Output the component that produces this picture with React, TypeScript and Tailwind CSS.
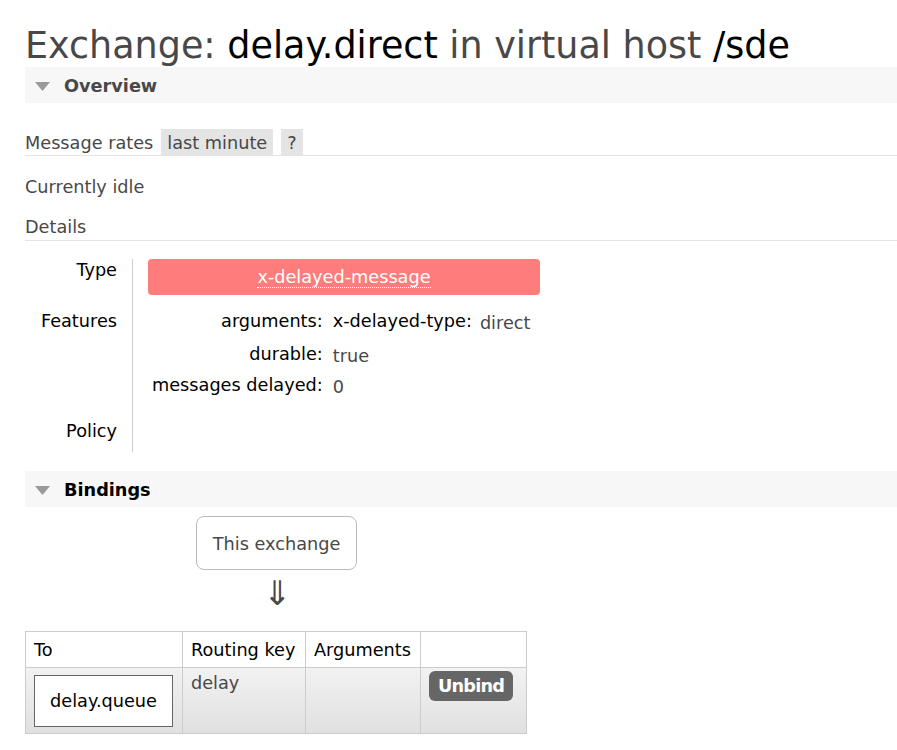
import React from "react";

const Tri = () => (
  <svg width="15" height="9" viewBox="0 0 15 9" className="shrink-0">
    <polygon points="0,0 15,0 7.5,9" fill="#9a9a9a" />
  </svg>
);

export default function App() {
  return (
    <div
      className="min-h-[750px] bg-white pl-[25px] text-[17.7px] text-[#484848]"
      style={{ fontFamily: '"DejaVu Sans", Verdana, sans-serif' }}
    >
      <h1 className="h-[67px] pt-[26px] text-[36.5px] leading-[40px] font-normal whitespace-nowrap">
        Exchange: <span className="text-black">delay.direct</span> in virtual host{" "}
        <span className="text-black">/sde</span>
      </h1>

      <div className="flex h-[36px] items-center gap-[14px] bg-[#f7f7f7] pl-[10px] pt-[3px] font-bold text-[#484848]">
        <Tri />
        <span>Overview</span>
      </div>

      <div className="mt-[26px] flex h-[27px] items-stretch border-b border-[#e4e4e4]">
        <span className="flex items-center pt-[2px]">Message rates</span>
        <span className="ml-[8px] flex items-center bg-[#e4e4e4] px-[6px] pt-[2px]">last minute</span>
        <span className="ml-[8px] flex items-center bg-[#e4e4e4] px-[6px] pt-[2px]">?</span>
      </div>

      <div className="mt-[18px] leading-[26px]">Currently idle</div>
      <div className="mt-[14px] border-b border-[#e4e4e4] leading-[26px]">Details</div>

      <div className="mt-[18px] flex">
        <div className="w-[108px] shrink-0 border-r border-[#cccccc] pr-[15px] text-right text-black">
          <div className="h-[45px] leading-[22px]">Type</div>
          <div className="h-[115px] pt-[6px] leading-[22px]">Features</div>
          <div className="h-[33px] pt-[1px] leading-[22px]">Policy</div>
        </div>
        <div className="pl-[15px]">
          <div className="flex h-[36px] w-[392px] items-center justify-center rounded-[4px] bg-[#ff7c7c] text-white">
            <span className="border-b border-dotted border-white leading-[20px]">x-delayed-message</span>
          </div>
          <div className="mt-[14px] grid grid-cols-[auto_auto] justify-start gap-x-[10px] pl-[4px] text-black">
            <div className="h-[33px] text-right leading-[24px]">arguments:</div>
            <div className="flex h-[33px] gap-[8px] leading-[24px]">
              <span>x-delayed-type:</span>
              <span className="mt-[2px] text-[#484848]">direct</span>
            </div>
            <div className="h-[31px] text-right leading-[24px]">durable:</div>
            <div className="mt-[2px] h-[29px] leading-[24px] text-[#484848]">true</div>
            <div className="h-[31px] text-right leading-[24px]">messages delayed:</div>
            <div className="mt-[2px] h-[29px] leading-[24px] text-[#484848]">0</div>
          </div>
        </div>
      </div>

      <div className="mt-[19px] flex h-[36px] items-center gap-[14px] bg-[#f7f7f7] pl-[10px] pt-[3px] font-bold text-black">
        <Tri />
        <span>Bindings</span>
      </div>

      <div className="ml-[171px] mt-[9px] flex h-[54px] w-[161px] items-center justify-center rounded-[8px] border border-[#bbbbbb] pt-[3px]">
        This exchange
      </div>
      <div className="ml-[171px] flex h-[46px] w-[161px] items-center justify-center text-[34px] leading-none font-light">
        ⇓
      </div>

      <table className="mt-[15px] border-collapse">
        <thead>
          <tr className="h-[36px] text-black">
            <th className="w-[157px] border border-[#cccccc] px-[8px] pt-[2px] text-left font-normal">To</th>
            <th className="w-[123px] border border-[#cccccc] px-[8px] pt-[2px] text-left font-normal">Routing key</th>
            <th className="w-[115px] border border-[#cccccc] px-[8px] pt-[2px] text-left font-normal">Arguments</th>
            <th className="w-[106px] border border-[#cccccc] px-[8px] text-left font-normal"></th>
          </tr>
        </thead>
        <tbody>
          <tr className="h-[66px] bg-gradient-to-b from-[#f2f2f2] to-[#e0e0e0]">
            <td className="border border-[#cccccc] px-[8px] align-middle">
              <div className="flex h-[52px] w-[139px] items-center justify-center border border-[#666666] bg-white pt-[2px] text-black">
                delay.queue
              </div>
            </td>
            <td className="border border-[#cccccc] px-[8px] pt-[2px] align-top">delay</td>
            <td className="border border-[#cccccc] px-[8px] align-top"></td>
            <td className="border border-[#cccccc] px-[8px] pt-[3px] align-top">
              <div className="flex h-[30px] w-[84px] items-center justify-center rounded-[6px] bg-[#666666] font-bold tracking-[-0.8px] text-white">
                Unbind
              </div>
            </td>
          </tr>
        </tbody>
      </table>
    </div>
  );
}
